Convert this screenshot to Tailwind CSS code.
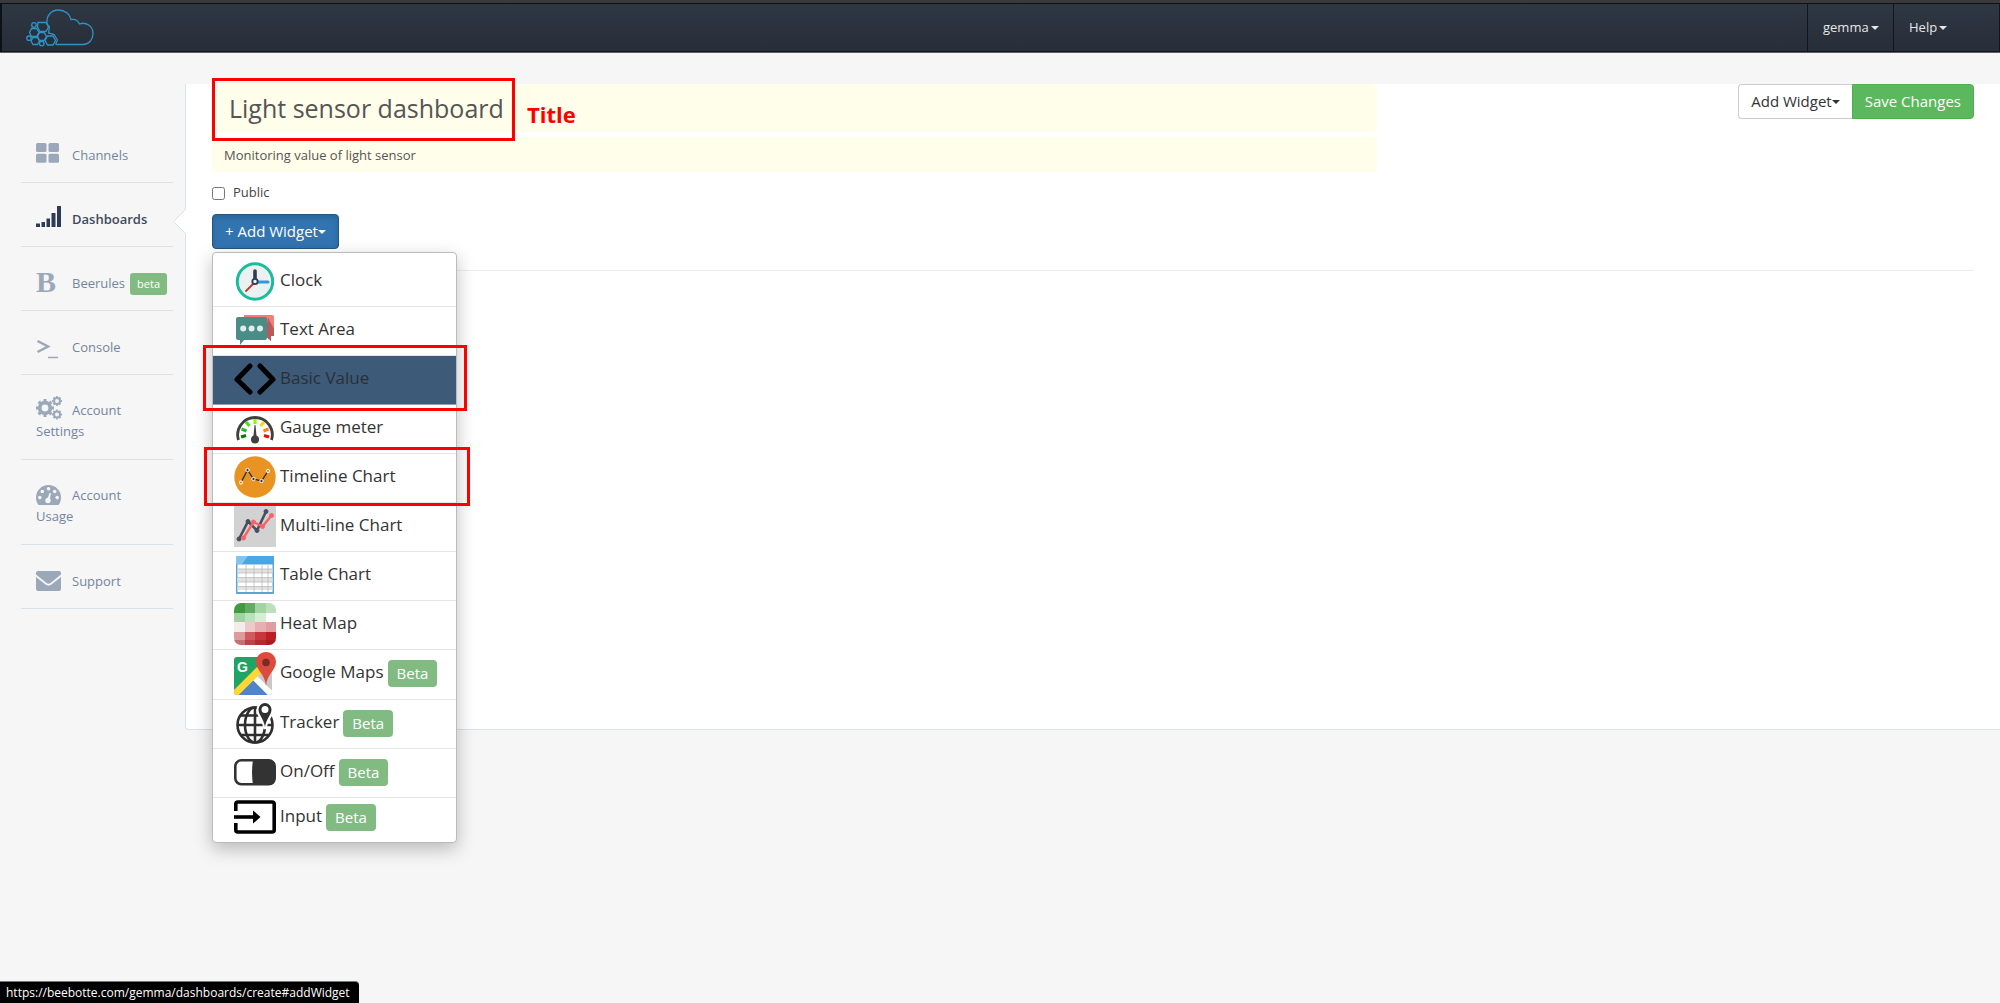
<!DOCTYPE html>
<html lang="en">
<head>
    <meta charset="UTF-8">
    <meta name="viewport" content="width=device-width, initial-scale=1.0">
    <title>Beebotte - Create dashboard</title>
    <script src="https://cdn.jsdelivr.net/npm/@tailwindcss/browser@4"></script>
    <style>
        body {
            font-family: 'Open Sans', 'Noto Sans', sans-serif;
        }
    </style>
</head>
<body class="relative flex flex-col min-h-screen bg-[#f6f6f6] text-[13px] text-[#444] overflow-x-hidden">

    <!-- Top bar -->
    <header class="flex items-stretch justify-between h-[53px] border-t-3 border-[#3a3a3a] border-b border-b-[#5a5f66] bg-linear-to-b from-[#2d3843] to-[#282d39] shadow-[inset_2px_1px_0_#0d1014,inset_0_-1px_0_#14181d]">
        <a href="#" aria-label="Home" class="pl-[26px] pt-1">
            <svg width="70" height="42" viewBox="26 7 70 42" fill="none" stroke="#2f93c4" stroke-width="1.3">
                <path d="M47 24C46 16 51 10 58.500 10C65 10 70 14 71 19.500C74.500 18.800 78 20.500 79.500 24C86 21.500 93 26 93 33.500C93 39.500 89 44.500 83 44.500H56"/>
                <path d="M47 24L49.500 27L48.500 33L54 34.500L57.500 40L55.500 44.500"/>
                <path d="M38 22.500H46L48.500 27L46 31.500H40L37.500 27Z"/>
                <path d="M31.500 28.500H36.500L39 32.500L36.500 36.500H31.500L29.500 32.500Z"/>
                <path d="M39.500 32.500H44L46.500 36.500L44 40.500H39.500L37.500 36.500Z"/>
                <path d="M33 37.500H37.500L39.500 41L37.500 44.500H33L31 41Z"/>
                <path d="M47.500 36H53L55.500 40.500L53 45H47.500L45 40.500Z"/>
                <circle cx="34" cy="25" r="2.300"/>
                <circle cx="29" cy="38.200" r="2.200"/>
                <circle cx="41.800" cy="43.600" r="2.300"/>
            </svg>
        </a>
        <nav class="flex text-[#e6e6e6] border-r border-[#12161b]">
            <button type="button" class="flex items-center w-[86px] pl-[15px] gap-[2px] border-l border-[#12161b]">gemma
                <svg width="8" height="4" viewBox="0 0 8 4" fill="currentColor"><path d="M0 0H8L4 4Z"/></svg>
            </button>
            <button type="button" class="flex items-center w-[106px] pl-[15px] gap-[2px] border-l border-[#12161b]">Help
                <svg width="8" height="4" viewBox="0 0 8 4" fill="currentColor"><path d="M0 0H8L4 4Z"/></svg>
            </button>
        </nav>
    </header>

    <div class="flex mt-[31px]">

        <!-- Side menu -->
        <nav class="w-[185px] shrink-0 pl-[21px] pr-3 pt-[35px] text-[#7385a0] leading-[21px]">
            <a href="#" class="block h-16 pl-[15px] pt-[26px] border-b border-[#d8e2ea]">
                <svg class="inline-block w-[23px] mr-[13px] -mt-2" height="20" viewBox="0 0 23 20" fill="#9aa8ba"><rect width="10.500" height="9" rx="1.500"/><rect x="12.500" width="10.500" height="9" rx="1.500"/><rect y="10.700" width="10.500" height="9" rx="1.500"/><rect x="12.500" y="10.700" width="10.500" height="9" rx="1.500"/></svg>Channels
            </a>
            <a href="#" class="relative block h-16 pl-[15px] pt-[26px] border-b border-[#d8e2ea] font-semibold text-[#3d4a5d]">
                <svg class="inline-block w-[25px] mr-[11px] -mt-2" height="21" viewBox="0 0 25 21" fill="#2e3b56"><path d="M0 17.500H4V21H0ZM5.500 16H9V21H5.500ZM10.500 12.500H14V21H10.500ZM15.500 7H19.500V21H15.500ZM21 0H25V21H21Z"/></svg>Dashboards
                <svg class="absolute -right-[13px] top-[26px]" width="14" height="25" viewBox="0 0 14 25"><path d="M14 0L1.500 12.500L14 25Z" fill="#fff"/><path d="M13.500 .5L1.500 12.500L13.500 24.500" fill="none" stroke="#d8e2ea"/></svg>
            </a>
            <a href="#" class="flex h-16 pl-[15px] pt-[26px] border-b border-[#d8e2ea]">
                <span class="w-9 -mt-[2px] font-['Liberation_Serif',serif] font-bold text-[30px] leading-[21px] text-[#9aa8ba]">B</span>Beerules
                <span class="h-[22px] ml-[5px] px-[7px] rounded-[3px] bg-[#82bb82] text-white text-[11px]">beta</span>
            </a>
            <a href="#" class="block h-16 pl-[15px] pt-[26px] border-b border-[#d8e2ea]">
                <svg class="inline-block w-[23px] mr-[13px]" height="20" viewBox="0 0 23 20" fill="none" stroke="#9aa8ba" stroke-width="2.500"><path d="M1.500 2L12 7.500L1.500 13"/><path d="M12 18.500H22" stroke-width="1.500"/></svg>Console
            </a>
            <a href="#" class="block h-[85px] pl-[15px] pt-[25px] border-b border-[#d8e2ea]">
                <svg class="inline-block w-[27px] mr-[9px] -mt-2" height="24" viewBox="0 0 27 24" fill="none" stroke="#9aa8ba">
                    <circle cx="9" cy="12" r="5.300" stroke-width="3.800"/><circle cx="9" cy="12" r="7.700" stroke-width="2.600" pathLength="32" stroke-dasharray="2 2" stroke-dashoffset="1"/>
                    <circle cx="21" cy="5" r="3" stroke-width="2"/><circle cx="21" cy="5" r="4.300" stroke-width="1.600" pathLength="32" stroke-dasharray="2 2" stroke-dashoffset="1"/>
                    <circle cx="21" cy="18.500" r="3" stroke-width="2"/><circle cx="21" cy="18.500" r="4.300" stroke-width="1.600" pathLength="32" stroke-dasharray="2 2" stroke-dashoffset="1"/>
                </svg>Account<br>Settings
            </a>
            <a href="#" class="block h-[85px] pl-[15px] pt-[25px] border-b border-[#d8e2ea]">
                <svg class="inline-block w-[25px] mr-[11px] -mt-1" height="20" viewBox="0 0 25 20" fill="#9aa8ba">
                    <path d="M2.500 20C1 18 0 15.500 0 12.500C0 5.500 5.600 0 12.500 0S25 5.500 25 12.500C25 15.500 24 18 22.500 20Z"/>
                    <g fill="#f6f6f6"><circle cx="3.800" cy="12.600" r="1.800"/><circle cx="6.300" cy="6.500" r="1.800"/><circle cx="12.500" cy="3.800" r="1.800"/><circle cx="18.700" cy="6.500" r="1.800"/><circle cx="21.200" cy="12.600" r="1.800"/><circle cx="12" cy="15.500" r="2.700"/><path d="M11 15L13.500 8L15 8.300L13.500 15.500Z"/></g>
                </svg>Account<br>Usage
            </a>
            <a href="#" class="block h-16 pl-[15px] pt-[26px] border-b border-[#d8e2ea]">
                <svg class="inline-block w-[25px] mr-[11px] -mt-1" height="20" viewBox="0 0 25 20" fill="#9aa8ba"><path d="M2 0H23Q25 0 25 2V3.500L14.500 12Q12.500 13.500 10.500 12L0 3.500V2Q0 0 2 0Z"/><path d="M0 6L9.500 13.500Q12.500 15.800 15.500 13.500L25 6V18Q25 20 23 20H2Q0 20 0 18Z"/></svg>Support
            </a>
        </nav>

        <!-- Dashboard editor -->
        <main class="flex-1 min-h-[646px] pl-[26px] pr-[26px] bg-white border-l border-b border-[#d8e2ea] rounded-bl-sm">
            <div class="flex justify-between items-start">
                <div class="w-2/3 pr-[10px]">
                    <div class="relative">
                        <input type="text" aria-label="Dashboard title" value="Light sensor dashboard" class="block w-full h-12 px-[17px] rounded-md bg-[#fffeeb] text-[25px] text-[#555]">
                        <div class="absolute left-0 -top-[6px] w-[303px] h-[63px] border-3 border-[#f00]"></div>
                        <span class="absolute left-[315px] top-[14px] text-[22px] leading-8 font-bold text-[#f00]">Title</span>
                    </div>
                    <input type="text" aria-label="Dashboard description" value="Monitoring value of light sensor" class="block w-full h-[35px] mt-[5px] px-3 rounded-sm bg-[#fffeeb] text-[13px] text-[#555]">
                </div>
                <div class="flex text-[15px]">
                    <button type="button" class="flex items-center h-[35px] px-3 rounded-l-sm border border-r-0 border-[#ccc] bg-white text-[#333]">Add Widget
                        <svg width="8" height="4" viewBox="0 0 8 4" fill="currentColor"><path d="M0 0H8L4 4Z"/></svg>
                    </button>
                    <button type="button" class="h-[35px] px-3 rounded-r-sm border border-[#4cae4c] bg-[#5cb85c] text-white">Save Changes</button>
                </div>
            </div>

            <label class="flex items-center gap-2 h-[42px] leading-5">
                <input type="checkbox" class="w-[13px] h-[13px] mt-[1px]"><span class="-mt-[2px]">Public</span>
            </label>

            <div class="relative">
                <button type="button" class="flex items-center h-[35px] px-3 rounded-sm border border-[#245580] bg-[#3174b0] text-white text-[15px] shadow-[inset_0_3px_5px_rgba(0,0,0,0.125)]">+ Add Widget
                    <svg width="8" height="4" viewBox="0 0 8 4" fill="currentColor"><path d="M0 0H8L4 4Z"/></svg>
                </button>

                <!-- Widget list -->
                <ul class="absolute left-0 top-[38px] z-10 w-[245px] pt-[5px] rounded-sm border border-[#bbb] bg-white text-[17px] text-[#333] shadow-[0_6px_18px_rgba(0,0,0,0.25)]">
                    <li class="border-b border-[#e5e5e5]"><a href="#" class="flex items-center gap-1 h-12 pb-[2px] pl-[21px]">
                        <svg width="42" height="42" viewBox="0 0 42 42" class="shrink-0"><circle cx="21" cy="21.500" r="17.700" fill="#ebf0f1" stroke="#1abc9c" stroke-width="3"/><path d="M21 22H34" stroke="#3498db" stroke-width="3" stroke-linecap="round"/><path d="M21 22L12 31" stroke="#c0392b" stroke-width="1.800" stroke-linecap="round"/><path d="M21 21V11" stroke="#2c3e50" stroke-width="3.600" stroke-linecap="round"/><circle cx="21" cy="21.500" r="2.700" fill="#ebf0f1" stroke="#2c3e50" stroke-width="1.800"/></svg>
                        <span class="pb-[3px]">Clock</span>
                    </a></li>
                    <li class="border-b border-[#e5e5e5]"><a href="#" class="flex items-center gap-1 h-12 pb-[2px] pl-[21px]">
                        <svg width="42" height="42" viewBox="0 0 42 42" class="shrink-0"><path d="M10 6H38Q40 6 40 8V27L37 26.500V32L32 27H10Z" fill="#f77b77"/><path d="M34 9L40 20V27H37V32L31 27Z" fill="#b85a59"/><path d="M4 8H31Q33 8 33 10V29Q33 31 31 31H10L6 36V31H4Q2 31 2 29V10Q2 8 4 8Z" fill="#4a8c87"/><g fill="#dfeceb"><circle cx="9.200" cy="19.500" r="3"/><circle cx="17.600" cy="19.500" r="3"/><circle cx="26" cy="19.500" r="3"/></g></svg>
                        <span class="pb-[3px]">Text Area</span>
                    </a></li>
                    <li class="relative border-b border-[#8fa1b3] bg-[#3d5a78]"><a href="#" class="flex items-center gap-1 h-12 pb-[2px] pl-[21px] text-[#2b3036]">
                        <svg width="42" height="42" viewBox="0 0 42 42" class="shrink-0" fill="none" stroke="#000" stroke-width="5" stroke-linecap="round" stroke-linejoin="round"><path d="M16 8L3 21.500L16 34"/><path d="M26 8L39 21.500L26 34"/></svg>
                        <span class="pb-[3px]">Basic Value</span>
                    </a>
                        <div class="absolute -left-[10px] -top-[11px] w-[264px] h-[66px] border-3 border-[#f00]"></div>
                    </li>
                    <li class="border-b border-[#e5e5e5]"><a href="#" class="flex items-center gap-1 h-12 pb-[2px] pl-[21px]">
                        <svg width="42" height="42" viewBox="0 0 42 42" class="shrink-0" fill="none"><path d="M4.500 33A17.300 17.300 0 1 1 37.500 33" stroke="#404040" stroke-width="2.800"/><g stroke-width="3"><path d="M7 30L12 28.500" stroke="#0a7a0a"/><path d="M7.500 22L12.500 24" stroke="#2bb92b"/><path d="M12 15L15.500 19" stroke="#4be01c"/><path d="M21 12V17" stroke="#7fff00"/><path d="M30 15L26.500 19" stroke="#ffd400"/><path d="M34.500 22L29.500 24" stroke="#ff7f1c"/><path d="M35 30L30 28.500" stroke="#f00"/></g><path d="M20.500 18H21.500L22.500 29H19.500Z" fill="#404040"/><circle cx="21" cy="32.500" r="4" fill="#404040"/></svg>
                        <span class="pb-[3px]">Gauge meter</span>
                    </a></li>
                    <li class="relative border-b border-[#e5e5e5]"><a href="#" class="flex items-center gap-1 h-12 pb-[2px] pl-[21px]">
                        <svg width="42" height="42" viewBox="0 0 42 42" class="shrink-0"><circle cx="21" cy="21" r="20.700" fill="#e99323"/><path d="M7 26.500L13.500 14L19.500 23L27.500 25L34 15" fill="none" stroke="#2a2a2a" stroke-width="1.300"/><g fill="#333" stroke="#fff" stroke-width="1"><circle cx="7" cy="26.500" r="1.700" fill="#e99323"/><circle cx="13.500" cy="14" r="1.700"/><circle cx="19.500" cy="23" r="1.700"/><circle cx="27.500" cy="25" r="1.700"/><circle cx="34" cy="15" r="1.700" fill="#e99323"/></g></svg>
                        <span class="pb-[3px]">Timeline Chart</span>
                    </a>
                        <div class="absolute -left-[9px] -top-[7px] w-[266px] h-[59px] border-3 border-[#f00]"></div>
                    </li>
                    <li class="border-b border-[#e5e5e5]"><a href="#" class="flex items-center gap-1 h-12 pb-[2px] pl-[21px]">
                        <svg width="42" height="42" viewBox="0 0 42 42" class="shrink-0"><path fill="#d2d2d2" d="M0 0H42V42H0Z"/><g fill="#46505e" stroke="#46505e"><path d="M5 34L14 16.500L23 25.500L32 6.500" fill="none" stroke-width="2.600"/><circle cx="5" cy="34" r="2"/><circle cx="14" cy="16.500" r="2"/><circle cx="23" cy="25.500" r="2"/><circle cx="32" cy="6.500" r="2"/></g><g fill="#fb6264" stroke="#fb6264"><path d="M9.500 33L19.500 17L28.500 21.500L37.500 10.500" fill="none" stroke-width="2.400"/><circle cx="9.500" cy="33" r="2"/><circle cx="19.500" cy="17" r="2"/><circle cx="28.500" cy="21.500" r="2"/><circle cx="37.500" cy="10.500" r="2"/></g></svg>
                        <span class="pb-[3px]">Multi-line Chart</span>
                    </a></li>
                    <li class="border-b border-[#e5e5e5]"><a href="#" class="flex items-center gap-1 h-12 pb-[2px] pl-[21px]">
                        <svg width="42" height="42" viewBox="0 0 42 42" class="shrink-0"><rect x="2" y="2" width="38" height="38" rx="1" fill="#5aa5d2"/><rect x="2" y="2" width="38" height="8" fill="#4ba6e4"/><path d="M2 2H14L8 10H2Z" fill="#82c4ee"/><path fill="#fff" d="M3.500 10.500H38.500V38H3.500Z"/><path fill="#e2e2e2" d="M3.500 15H38.500V19H3.500ZM3.500 23.500H38.500V28H3.500ZM3.500 32.500H38.500V36H3.500Z"/><path d="M3.500 15H38.500M3.500 19H38.500M3.500 23.500H38.500M3.500 28H38.500M3.500 32.500H38.500M12 10.500V38M20 10.500V38M28 10.500V38M34 10.500V38" stroke="#bdbdbd" stroke-width=".8"/></svg>
                        <span class="pb-[3px]">Table Chart</span>
                    </a></li>
                    <li class="border-b border-[#e5e5e5]"><a href="#" class="flex items-center gap-1 h-12 pb-[2px] pl-[21px]">
                        <svg width="42" height="42" viewBox="0 0 42 42" class="shrink-0"><defs><clipPath id="heatClip"><rect width="42" height="42" rx="7"/></clipPath></defs><g clip-path="url(#heatClip)">
                            <path fill="#3f9a41" d="M0 0H11V10H0Z"/><path fill="#5fad60" d="M11 0H21V10H11Z"/><path fill="#a3d3a2" d="M21 0H32V10H21Z"/><path fill="#bce0ba" d="M32 0H42V10H32Z"/>
                            <path fill="#a2d1a2" d="M0 10H11V19H0Z"/><path fill="#bde0bc" d="M11 10H21V19H11Z"/><path fill="#d7edd5" d="M21 10H32V19H21Z"/><path fill="#fdfdfd" d="M32 10H42V19H32Z"/>
                            <path fill="#f3ecec" d="M0 19H11V29H0Z"/><path fill="#eccaca" d="M11 19H21V29H11Z"/><path fill="#e6b0b2" d="M21 19H32V29H21Z"/><path fill="#df9fa2" d="M32 19H42V29H32Z"/>
                            <path fill="#dc9c9e" d="M0 29H11V42H0Z"/><path fill="#d05a5e" d="M11 29H21V42H11Z"/><path fill="#c9363b" d="M21 29H32V42H21Z"/><path fill="#bb2026" d="M32 29H42V42H32Z"/><path fill="#8c1015" opacity=".3" d="M0 37H42V42H0Z"/></g></svg>
                        <span class="pb-[3px]">Heat Map</span>
                    </a></li>
                    <li class="border-b border-[#e5e5e5]"><a href="#" class="flex items-center gap-1 h-[49px] pb-[2px] pl-[21px]">
                        <svg width="42" height="43" viewBox="0 0 42 43" class="shrink-0"><defs><clipPath id="mapClip"><rect y="5" width="38" height="38" rx="3"/></clipPath></defs><g clip-path="url(#mapClip)"><path fill="#1fa463" d="M0 5H38V43H0Z"/><path fill="#c8c8c8" d="M38 14V43L19 24Z"/><path fill="#4f83cc" d="M3 43L19 26L36 43Z"/><path d="M19 24L38 43" stroke="#fff" stroke-width="6"/><path d="M0 43L26 17" stroke="#fdd835" stroke-width="7"/></g><path fill="#4f83cc" d="M5 43L19 29L33 43Z"/><text x="3" y="20" font-family="Liberation Sans, sans-serif" font-size="14" font-weight="bold" fill="#fff">G</text><path d="M32 0C26 0 22 4.500 22 10C22 18 31 22 32 34C33 22 42 18 42 10C42 4.500 38 0 32 0Z" fill="#dc4b3e"/><circle cx="32" cy="10.500" r="3.800" fill="#7b2a25"/></svg>
                        <span class="pb-[3px]">Google Maps</span> <span class="h-[27px] px-[9px] rounded-sm bg-[#82bb82] text-white text-[15px] leading-[27px]">Beta</span>
                    </a></li>
                    <li class="border-b border-[#e5e5e5]"><a href="#" class="flex items-center gap-1 h-12 pb-[2px] pl-[21px]">
                        <svg width="42" height="42" viewBox="0 0 42 42" class="shrink-0" fill="none" stroke="#2f2f2f" stroke-width="2.600"><circle cx="21" cy="23" r="17.500"/><ellipse cx="21" cy="23" rx="10" ry="17.500"/><path d="M21 5V41M3.500 23H38.500M6 13.500H36M6 33H36"/><path d="M31 27C30 17 24 15 24 8A7 7 0 0 1 38 8C38 15 32 17 31 27Z" fill="#fff" stroke="#fff" stroke-width="3"/><path d="M31 25C30 17 24.500 13 24.500 7.500A6.500 6.500 0 0 1 37.500 7.500C37.500 13 32 17 31 25Z" fill="#2f2f2f" stroke="none"/><circle cx="31" cy="7.500" r="3.500" fill="#fff" stroke="none"/></svg>
                        <span class="pb-[3px]">Tracker</span> <span class="h-[27px] px-[9px] rounded-sm bg-[#82bb82] text-white text-[15px] leading-[27px]">Beta</span>
                    </a></li>
                    <li class="border-b border-[#e5e5e5]"><a href="#" class="flex items-center gap-1 h-12 pb-[2px] pl-[21px]">
                        <svg width="42" height="42" viewBox="0 0 42 42" class="shrink-0"><rect x="1.300" y="9.300" width="39.400" height="24" rx="6" fill="#fff" stroke="#333" stroke-width="2.600"/><path d="M19 9H35Q41 9 41 15V28Q41 34 35 34H19Q17 21.500 19 9Z" fill="#333"/></svg>
                        <span class="pb-[3px]">On/Off</span> <span class="h-[27px] px-[9px] rounded-sm bg-[#82bb82] text-white text-[15px] leading-[27px]">Beta</span>
                    </a></li>
                    <li><a href="#" class="flex items-center gap-1 h-11 pb-[6px] pl-[21px]">
                        <svg width="42" height="34" viewBox="0 0 42 34" class="shrink-0" fill="none" stroke="#000" stroke-width="3.600"><path d="M1.800 11V4Q1.800 2 4 2H38Q40.200 2 40.200 4V30Q40.200 32 38 32H4Q1.800 32 1.800 30V23"/><path d="M0 17H20"/><path d="M19 10.500L26.500 17L19 23.500Z" fill="#000" stroke="none"/></svg>
                        <span class="pb-[3px]">Input</span> <span class="h-[27px] px-[9px] rounded-sm bg-[#82bb82] text-white text-[15px] leading-[27px]">Beta</span>
                    </a></li>
                </ul>
            </div>

            <hr class="mt-[21px] border-[#eee]">
        </main>
    </div>

    <!-- Link status bubble -->
    <div class="fixed left-0 bottom-0 h-[22px] pl-[6px] pr-[9px] rounded-tr-sm border-t border-[#777] bg-black text-white text-[12px] leading-[21px]">https://beebotte.com/gemma/dashboards/create#addWidget</div>

</body>
</html>
